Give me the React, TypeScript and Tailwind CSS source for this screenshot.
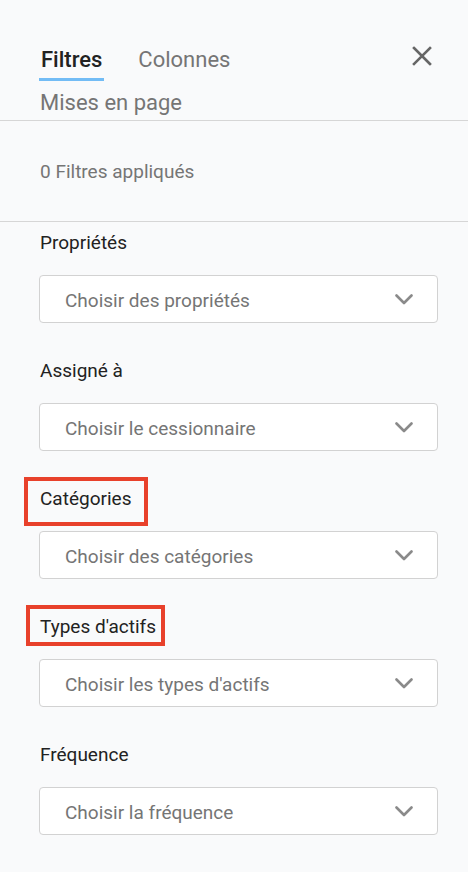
const font = { fontFamily: 'Roboto, "Liberation Sans", sans-serif' }

type Filter = {
  label: string
  placeholder: string
  mark?: string
}

const filters: Filter[] = [
  { label: 'Propriétés', placeholder: 'Choisir des propriétés' },
  { label: 'Assigné à', placeholder: 'Choisir le cessionnaire' },
  { label: 'Catégories', placeholder: 'Choisir des catégories', mark: 'left-[-15px] top-[-10px] w-[124px] h-[49px]' },
  { label: "Types d'actifs", placeholder: "Choisir les types d'actifs", mark: 'left-[-13px] top-[-10px] w-[139px] h-[41px]' },
  { label: 'Fréquence', placeholder: 'Choisir la fréquence' },
]

function Chevron() {
  return (
    <svg width="18" height="11" viewBox="0 0 18 11" fill="none" stroke="#8a8a8a" strokeWidth={2.6} strokeLinecap="round" strokeLinejoin="round">
      <path d="M1.5 1.5 L9 9 L16.5 1.5" />
    </svg>
  )
}

export default function App() {
  return (
    <div className="w-[468px] min-h-[872px] bg-[#f9fafb] text-[#222]" style={font}>
      {/* header with tabs */}
      <div className="flex justify-between pl-10 pr-[34px] pt-[47px] pb-[4px] border-b border-[#d6d6d6]">
        <div>
          <div className="flex items-start gap-[34px]">
            <span className="text-[22px] leading-[26px] font-medium text-[#222] pb-[5px] px-[2px] -ml-[1px] border-b-[3px] border-[#72bcf5]">
              Filtres
            </span>
            <span className="text-[22px] leading-[26px] text-[#757575]">Colonnes</span>
          </div>
          <div className="mt-[9px] text-[22px] leading-[26px] text-[#757575]">Mises en page</div>
        </div>
        <button className="mt-[-3px] h-[24px] w-[24px] flex items-center justify-center self-start">
          <svg width="20" height="20" viewBox="0 0 20 20" fill="none" stroke="#666" strokeWidth={2.6} strokeLinecap="square">
            <path d="M2 2 L18 18 M18 2 L2 18" />
          </svg>
        </button>
      </div>

      <div className="px-10 pt-[39px] pb-[37px] border-b border-[#d6d6d6] text-[19px] leading-6 text-[#757575]">
        0 Filtres appliqués
      </div>

      <div className="pl-[39px] pr-[30px] pt-[9px]">
        {filters.map((f) => (
          <div key={f.label} className="mb-[36px]">
            <div className="relative pl-[1px] text-[19px] leading-6 text-[#222]">
              {f.mark && (
                <div className={`absolute border-4 border-[#e8412b] ${f.mark}`} />
              )}
              {f.label}
            </div>
            <div className="mt-[20px] h-[48px] bg-white border border-[#d2d2d2] rounded-[4px] flex items-center justify-between pl-[25px] pr-[24px]">
              <span className="text-[19px] leading-6 text-[#757575] pt-[4px]">{f.placeholder}</span>
              <Chevron />
            </div>
          </div>
        ))}
      </div>
    </div>
  )
}
